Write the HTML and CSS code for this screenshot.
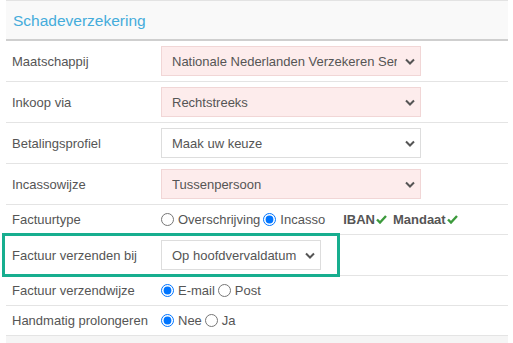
FILE: index.html
```html
<!DOCTYPE html>
<html lang="nl">
<head>
    <meta charset="UTF-8">
    <title>Schadeverzekering</title>
    <link rel="stylesheet" href="styles.css">
</head>
<body>
    <div class="panel">
        <div class="panel-heading">Schadeverzekering</div>

        <div class="form-row">
            <div class="label">Maatschappij</div>
            <div class="select required">
                <span class="select-text">Nationale Nederlanden Verzekeren Ser</span>
                <svg class="chevron" width="10" height="7" viewBox="0 0 10 7"><path d="M1 1.5 L5 5.5 L9 1.5" fill="none" stroke="#555" stroke-width="2"/></svg>
            </div>
        </div>

        <div class="form-row">
            <div class="label">Inkoop via</div>
            <div class="select required">
                <span class="select-text">Rechtstreeks</span>
                <svg class="chevron" width="10" height="7" viewBox="0 0 10 7"><path d="M1 1.5 L5 5.5 L9 1.5" fill="none" stroke="#555" stroke-width="2"/></svg>
            </div>
        </div>

        <div class="form-row">
            <div class="label">Betalingsprofiel</div>
            <div class="select">
                <span class="select-text">Maak uw keuze</span>
                <svg class="chevron" width="10" height="7" viewBox="0 0 10 7"><path d="M1 1.5 L5 5.5 L9 1.5" fill="none" stroke="#555" stroke-width="2"/></svg>
            </div>
        </div>

        <div class="form-row">
            <div class="label">Incassowijze</div>
            <div class="select required">
                <span class="select-text">Tussenpersoon</span>
                <svg class="chevron" width="10" height="7" viewBox="0 0 10 7"><path d="M1 1.5 L5 5.5 L9 1.5" fill="none" stroke="#555" stroke-width="2"/></svg>
            </div>
        </div>

        <div class="form-row radio-row">
            <div class="label">Factuurtype</div>
            <div class="options">
                <label class="option"><input type="radio" name="type"> Overschrijving</label>
                <label class="option"><input type="radio" name="type" checked> Incasso</label>
                <span class="status first">IBAN<svg class="check" width="11" height="9" viewBox="0 0 11 9"><path d="M1 4.5 L4 7.5 L10 1" fill="none" stroke="#3c9a3c" stroke-width="2.4"/></svg></span>
                <span class="status">Mandaat<svg class="check" width="11" height="9" viewBox="0 0 11 9"><path d="M1 4.5 L4 7.5 L10 1" fill="none" stroke="#3c9a3c" stroke-width="2.4"/></svg></span>
            </div>
        </div>

        <div class="form-row highlight-row">
            <div class="label">Factuur verzenden bij</div>
            <div class="select short">
                <span class="select-text">Op hoofdvervaldatum</span>
                <svg class="chevron" width="10" height="7" viewBox="0 0 10 7"><path d="M1 1.5 L5 5.5 L9 1.5" fill="none" stroke="#555" stroke-width="2"/></svg>
            </div>
            <div class="highlight"></div>
        </div>

        <div class="form-row radio-row">
            <div class="label">Factuur verzendwijze</div>
            <div class="options">
                <label class="option"><input type="radio" name="wijze" checked> E-mail</label>
                <label class="option"><input type="radio" name="wijze"> Post</label>
            </div>
        </div>

        <div class="form-row radio-row">
            <div class="label">Handmatig prolongeren</div>
            <div class="options">
                <label class="option"><input type="radio" name="prol" checked> Nee</label>
                <label class="option"><input type="radio" name="prol"> Ja</label>
            </div>
        </div>
    </div>
    <div class="panel-foot"></div>
</body>
</html>
```

FILE: styles.css
```css
body { margin: 0; font-family: "Liberation Sans", Arial, sans-serif; font-size: 13px; color: #555; background: #fff; }
.panel { margin: 0 5px 0 6px; border-top: 1px solid #e3e3e3; position: relative; }
.panel-heading { height: 38px; line-height: 39px; padding-left: 7px; background: #f9f9f9; border-bottom: 2px solid #cfcfcf; color: #45acdb; font-size: 15.5px; }

.form-row { display: grid; grid-template-columns: 155px 1fr; align-items: center; padding: 5px 0; border-bottom: 1px solid #e4e4e4; }
.label { padding-left: 6px; }

.select { width: 243px; height: 28px; border: 1px solid #ddd; background: #fff; display: flex; align-items: center; padding: 0 5px 0 10px; font-size: 13px; color: #555; }
.select.required { background: #fdecec; border-color: #f1d6d6; }
.select.short { width: 143px; }
.select-text { white-space: nowrap; overflow: hidden; flex: 1; margin-right: 8px; }
.chevron { flex: none; }

.radio-row { padding: 0; height: 29px; }
.options { display: flex; align-items: center; font-size: 13px; }
.option { display: flex; align-items: center; margin-right: 3px; }
.option input { margin: 0 4px 0 0; width: 13px; height: 13px; }
.status { font-weight: bold; display: flex; align-items: center; margin-right: 6px; }
.status.first { margin-left: 15px; }
.check { margin-left: 1px; }

.highlight-row { position: relative; }
.highlight { position: absolute; left: -4px; top: -2px; width: 332px; height: 38px; border: 3px solid #17ae8f; pointer-events: none; }

.panel-foot { margin: 0 5px 0 6px; height: 12px; background: #f5f5f5; }
```
